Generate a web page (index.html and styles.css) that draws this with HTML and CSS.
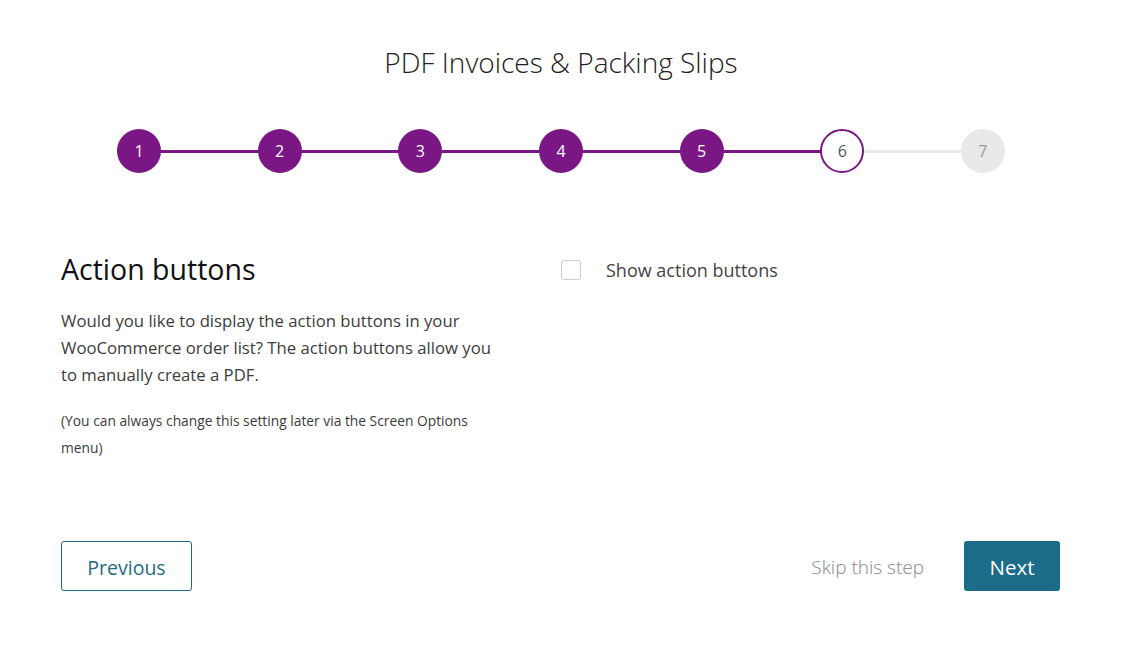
FILE: index.html
```html
<!DOCTYPE html>
<html>
<head>
<meta charset="utf-8">
<link rel="stylesheet" href="styles.css">
</head>
<body>
<div class="wizard">
  <h1 class="title">PDF Invoices &amp; Packing Slips</h1>
  <ol class="steps">
    <li class="step done">1</li>
    <li class="step done">2</li>
    <li class="step done">3</li>
    <li class="step done">4</li>
    <li class="step done">5</li>
    <li class="step current">6</li>
    <li class="step todo">7</li>
  </ol>
  <div class="content">
    <div class="intro">
      <h2 class="heading">Action buttons</h2>
      <p class="desc">Would you like to display the action buttons in your WooCommerce order list? The action buttons allow you to manually create a PDF.</p>
      <p class="note">(You can always change this setting later via the Screen Options menu)</p>
    </div>
    <div class="settings">
      <label class="check"><span class="box"></span><span class="check-label">Show action buttons</span></label>
    </div>
  </div>
  <div class="actions">
    <a class="btn btn-prev">Previous</a>
    <div class="actions-right">
      <a class="skip">Skip this step</a>
      <a class="btn btn-next">Next</a>
    </div>
  </div>
</div>
</body>
</html>
```
FILE: styles.css
```css
html, body {
  margin: 0;
  padding: 0;
  background: #fff;
}
body {
  font-family: "Open Sans", "Noto Sans", sans-serif;
  color: #3c3c3c;
}
.wizard {
  width: 1000px;
  margin: 0 auto;
  padding-top: 40px;
  padding-left: 1px;
}
.title {
  margin: 0;
  text-align: center;
  font-weight: 300;
  font-size: 28px;
  line-height: 44px;
  color: #222;
}
.steps {
  list-style: none;
  margin: 45px auto 0;
  padding: 0;
  width: 888px;
  display: flex;
  justify-content: space-between;
  background: linear-gradient(#7a1785, #7a1785) left center / 725px 3px no-repeat,
              linear-gradient(#e9e9e9, #e9e9e9) left center / 100% 3px no-repeat;
}
.step {
  width: 44px;
  height: 44px;
  border-radius: 50%;
  box-sizing: border-box;
  display: flex;
  align-items: center;
  justify-content: center;
  font-size: 16px;
}
.step.done {
  background: #7a1785;
  color: #fff;
}
.step.current {
  background: #fff;
  border: 2px solid #7a1785;
  color: #555;
}
.step.todo {
  background: #e9e9e9;
  color: #999;
}
.content {
  display: flex;
  margin-top: 78px;
}
.intro {
  width: 500px;
  box-sizing: border-box;
  padding-right: 58px;
}
.heading {
  margin: 0;
  font-weight: 400;
  font-size: 28.5px;
  line-height: 36px;
  color: #111;
}
.desc {
  margin: 20px 0 0;
  font-size: 16.7px;
  line-height: 27px;
  color: #3c3c3c;
}
.note {
  margin: 19px 0 0;
  font-size: 13.8px;
  line-height: 27px;
  color: #3c3c3c;
}
.settings {
  flex: 1;
  padding-top: 7px;
}
.check {
  display: flex;
  align-items: center;
  gap: 25px;
}
.box {
  width: 20px;
  height: 20px;
  box-sizing: border-box;
  border: 1px solid #ccc;
  border-radius: 3px;
  background: #fff;
}
.check-label {
  font-size: 18px;
  color: #444;
}
.actions {
  display: flex;
  justify-content: space-between;
  align-items: center;
  margin-top: 80px;
}
.actions-right {
  display: flex;
  align-items: center;
  gap: 40px;
}
.btn {
  display: inline-flex;
  align-items: center;
  justify-content: center;
  box-sizing: border-box;
  height: 50px;
  padding-top: 2px;
  border-radius: 3px;
  font-size: 19.5px;
}
.btn-prev {
  width: 131px;
  border: 1px solid #1e6a88;
  color: #1e6a88;
}
.btn-next {
  width: 96px;
  margin-right: 1px;
  background: #1c6b89;
  color: #fff;
  font-size: 20.5px;
}
.skip {
  font-size: 19px;
  font-weight: 300;
  color: #888;
  padding-top: 2px;
}
```
